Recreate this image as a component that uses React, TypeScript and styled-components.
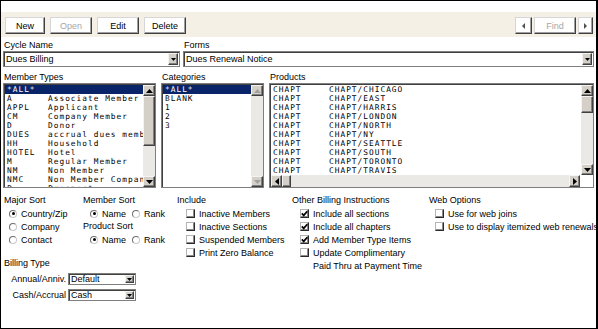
import React from 'react';
import styled, { createGlobalStyle } from 'styled-components';

const SANS = `"Liberation Sans", Arial, sans-serif`;
const MONO = `"DejaVu Sans Mono", "Liberation Mono", monospace`;
const FACE = '#d4d0c8';
const TRACK = '#ebe9e5';
const HILITE = '#0a246a';

const GlobalStyle = createGlobalStyle`
  * { box-sizing: border-box; }
  html, body { margin: 0; padding: 0; background: #fff; }
  body { font-family: ${SANS}; font-size: 9px; color: #000; }
`;

/* ---------- drawings ---------- */
type Dir = 'up' | 'down' | 'left' | 'right';
function Arrow({ dir, w, h, color = '#000' }: { dir: Dir; w: number; h: number; color?: string }) {
  const pts: Record<Dir, string> = {
    down: `0,0 ${w},0 ${w / 2},${h}`,
    up: `0,${h} ${w},${h} ${w / 2},0`,
    left: `${w},0 ${w},${h} 0,${h / 2}`,
    right: `0,0 0,${h} ${w},${h / 2}`,
  };
  return (
    <svg width={w} height={h} viewBox={`0 0 ${w} ${h}`}>
      <polygon points={pts[dir]} fill={color} />
    </svg>
  );
}

function CheckMark() {
  return (
    <svg width="7" height="7" viewBox="0 0 7 7">
      <path d="M0.8 3.4 L2.7 5.4 L6.3 1.2" fill="none" stroke="#000" strokeWidth="1.7" />
    </svg>
  );
}

/* ---------- frame & toolbar ---------- */
const Frame = styled.div`
  width: 598px;
  height: 329px;
  border: 1px solid #000;
  border-right-width: 2px;
  padding-top: 11px;
  display: flex;
  flex-direction: column;
  overflow: hidden;
  background: #fff;
`;

const Toolbar = styled.div`
  flex: none;
  height: 25px;
  background: #f4f0e6;
  display: flex;
  align-items: flex-start;
  padding: 5px 3px 0 4px;
`;

const ButtonGroup = styled.div<{ $gap: number }>`
  display: flex;
  gap: ${p => p.$gap}px;
`;

const Spacer = styled.div`
  flex: 1;
`;

const ToolButton = styled.button<{ $w: number }>`
  width: ${p => p.$w}px;
  height: 17px;
  margin: 0;
  padding: 0;
  background: #fff;
  border: 1px solid;
  border-color: #d6d6d6 #404040 #404040 #d6d6d6;
  box-shadow: inset -1px -1px 0 #a0a0a0;
  font-family: ${SANS};
  font-size: 9px;
  color: #000;
  display: flex;
  align-items: center;
  justify-content: center;
  &:disabled {
    color: #a6a6a6;
  }
`;

/* ---------- content ---------- */
const Content = styled.div`
  flex: 1;
  display: flex;
  flex-direction: column;
  padding: 0 2px;
`;

const TopFields = styled.div`
  display: grid;
  grid-template-columns: 177px 1fr;
  column-gap: 3px;
  margin-top: 3px;
`;

const Field = styled.div`
  display: flex;
  flex-direction: column;
  min-width: 0;
`;

const FieldLabel = styled.div`
  height: 11px;
  line-height: 11px;
  padding-left: 1px;
  white-space: nowrap;
`;

const Select = styled.div<{ $h: number }>`
  height: ${p => p.$h}px;
  border: 1px solid #7f7f7f;
  box-shadow: inset 1px 1px 0 #404040;
  background: #fff;
  display: flex;
  align-items: stretch;
  padding: 1px 1px 1px 2px;
`;

const SelectText = styled.div`
  flex: 1;
  display: flex;
  align-items: center;
  white-space: nowrap;
  overflow: hidden;
`;

const DropButton = styled.div<{ $w: number }>`
  flex: none;
  width: ${p => p.$w}px;
  background: ${FACE};
  border: 1px solid;
  border-color: #f4f4f4 #404040 #404040 #f4f4f4;
  box-shadow: inset -1px -1px 0 #808080;
  display: flex;
  align-items: center;
  justify-content: center;
`;

/* ---------- lists ---------- */
const ListsRow = styled.div`
  display: grid;
  grid-template-columns: 153px 103px 1fr;
  column-gap: 5px;
  margin-top: 5px;
`;

const ListBox = styled.div`
  height: 105px;
  border: 1px solid #7f7f7f;
  box-shadow: inset 1px 1px 0 #404040;
  padding: 1px 0 0 1px;
  display: flex;
  flex-direction: column;
  background: #fff;
  overflow: hidden;
`;

const ListBody = styled.div`
  flex: 1;
  min-height: 0;
  display: flex;
`;

const Items = styled.div`
  flex: 1;
  min-width: 0;
  overflow: hidden;
`;

const ItemRow = styled.div<{ $code: number; $selected?: boolean }>`
  display: grid;
  grid-template-columns: ${p => p.$code}px 1fr;
  height: 9px;
  line-height: 9px;
  padding-left: 2px;
  font-family: ${MONO};
  font-size: 7.8px;
  letter-spacing: 1.02px;
  white-space: pre;
  overflow: hidden;
  background: ${p => (p.$selected ? HILITE : 'transparent')};
  color: ${p => (p.$selected ? '#fff' : '#000')};
`;

const VScroll = styled.div`
  flex: none;
  width: 12px;
  display: flex;
  flex-direction: column;
  background: ${TRACK};
`;

const HScroll = styled.div`
  flex: none;
  height: 12px;
  display: flex;
  background: ${TRACK};
`;

const ScrollBtn = styled.div`
  flex: none;
  width: 12px;
  height: 11px;
  background: ${FACE};
  border: 1px solid;
  border-color: #f4f4f4 #404040 #404040 #f4f4f4;
  box-shadow: inset -1px -1px 0 #808080;
  display: flex;
  align-items: center;
  justify-content: center;
`;

const HScrollBtn = styled(ScrollBtn)`
  width: 11px;
  height: 12px;
`;

const Thumb = styled.div<{ $len: number; $horizontal?: boolean }>`
  flex: none;
  width: ${p => (p.$horizontal ? `${p.$len}px` : '12px')};
  height: ${p => (p.$horizontal ? '12px' : `${p.$len}px`)};
  background: ${FACE};
  border: 1px solid;
  border-color: #f4f4f4 #404040 #404040 #f4f4f4;
  box-shadow: inset -1px -1px 0 #808080;
`;

const Track = styled.div`
  flex: 1;
`;

const Corner = styled.div`
  flex: none;
  width: 13px;
  background: #fff;
`;

/* ---------- options ---------- */
const Options = styled.div`
  display: flex;
  margin-top: 6px;
`;

const LeftPanel = styled.div`
  flex: none;
  width: 173px;
  display: flex;
  flex-direction: column;
`;

const SortRow = styled.div`
  display: flex;
`;

const Group = styled.div<{ $w?: number }>`
  flex: ${p => (p.$w ? 'none' : '1')};
  width: ${p => (p.$w ? `${p.$w}px` : 'auto')};
  display: flex;
  flex-direction: column;
  min-width: 0;
`;

const GroupLabel = styled.div`
  height: 13px;
  line-height: 13px;
  padding-left: 1px;
  white-space: nowrap;
`;

const OptionRow = styled.div<{ $indent: number }>`
  height: 13px;
  display: flex;
  align-items: center;
  padding-left: ${p => p.$indent}px;
  white-space: nowrap;
`;

const RadioItem = styled.label<{ $after?: number }>`
  display: flex;
  align-items: center;
  gap: 4px;
  margin-right: ${p => p.$after ?? 0}px;
`;

const RadioCircle = styled.span<{ $on?: boolean }>`
  width: 8px;
  height: 8px;
  border-radius: 50%;
  border: 1px solid #6e6e6e;
  border-bottom-color: #c8c8c8;
  border-right-color: #c8c8c8;
  background: #fff;
  display: flex;
  align-items: center;
  justify-content: center;
  &::after {
    content: '';
    width: 3px;
    height: 3px;
    border-radius: 50%;
    background: ${p => (p.$on ? '#000' : 'transparent')};
  }
`;

const CheckItem = styled.label`
  display: flex;
  align-items: center;
  gap: 4px;
`;

const CheckBox = styled.span`
  flex: none;
  width: 9px;
  height: 9px;
  background: #fff;
  border: 1px solid;
  border-color: #b4b4b4 #2a2a2a #2a2a2a #b4b4b4;
  box-shadow: inset -1px -1px 0 #8a8a8a;
  display: flex;
  align-items: center;
  justify-content: center;
`;

const BillingBlock = styled.div`
  display: flex;
  flex-direction: column;
  margin-top: 11px;
`;

const BillingRow = styled.div`
  display: grid;
  grid-template-columns: 63px 68px;
  column-gap: 2px;
  align-items: center;
  margin-top: 3px;
  & + & {
    margin-top: 4px;
  }
`;

const BillingLabel = styled.div`
  text-align: right;
  white-space: nowrap;
`;

/* ---------- data ---------- */
const memberTypes: [string, string][] = [
  ['*ALL*', ''],
  ['A', 'Associate Member'],
  ['APPL', 'Applicant'],
  ['CM', 'Company Member'],
  ['D', 'Donor'],
  ['DUES', 'accrual dues member'],
  ['HH', 'Household'],
  ['HOTEL', 'Hotel'],
  ['M', 'Regular Member'],
  ['NM', 'Non Member'],
  ['NMC', 'Non Member Company'],
  ['P', 'Prospect'],
];

const categories = ['*ALL*', 'BLANK', '1', '2', '3'];

const products = ['CHICAGO', 'EAST', 'HARRIS', 'LONDON', 'NORTH', 'NY', 'SEATTLE', 'SOUTH', 'TORONTO', 'TRAVIS'];

function SelectBox({ value, h, btn }: { value: string; h: number; btn: number }) {
  return (
    <Select $h={h}>
      <SelectText>{value}</SelectText>
      <DropButton $w={btn}>
        <Arrow dir="down" w={5} h={3} />
      </DropButton>
    </Select>
  );
}

function Radio({ label, on, after }: { label: string; on?: boolean; after?: number }) {
  return (
    <RadioItem $after={after}>
      <RadioCircle $on={on} />
      {label}
    </RadioItem>
  );
}

function Check({ label, on }: { label: string; on?: boolean }) {
  return (
    <CheckItem>
      <CheckBox>{on && <CheckMark />}</CheckBox>
      {label}
    </CheckItem>
  );
}

export default function App() {
  return (
    <>
      <GlobalStyle />
      <Frame>
        <Toolbar>
          <ButtonGroup $gap={5}>
            <ToolButton $w={40}>New</ToolButton>
            <ToolButton $w={42} disabled>Open</ToolButton>
            <ToolButton $w={42}>Edit</ToolButton>
            <ToolButton $w={42}>Delete</ToolButton>
          </ButtonGroup>
          <Spacer />
          <ButtonGroup $gap={2}>
            <ToolButton $w={17}>
              <Arrow dir="left" w={3} h={6} color="#505050" />
            </ToolButton>
            <ToolButton $w={42} disabled>Find</ToolButton>
            <ToolButton $w={15}>
              <Arrow dir="right" w={3} h={6} color="#505050" />
            </ToolButton>
          </ButtonGroup>
        </Toolbar>

        <Content>
          <TopFields>
            <Field>
              <FieldLabel>Cycle Name</FieldLabel>
              <SelectBox value="Dues Billing" h={16} btn={10} />
            </Field>
            <Field>
              <FieldLabel>Forms</FieldLabel>
              <SelectBox value="Dues Renewal Notice" h={16} btn={10} />
            </Field>
          </TopFields>

          <ListsRow>
            <Field>
              <FieldLabel>Member Types</FieldLabel>
              <ListBox>
                <ListBody>
                  <Items>
                    {memberTypes.map(([code, desc], i) => (
                      <ItemRow key={code} $code={41} $selected={i === 0}>
                        <span>{code}</span>
                        <span>{desc}</span>
                      </ItemRow>
                    ))}
                  </Items>
                  <VScroll>
                    <ScrollBtn><Arrow dir="up" w={7} h={4} /></ScrollBtn>
                    <Thumb $len={50} />
                    <Track />
                    <ScrollBtn><Arrow dir="down" w={7} h={4} /></ScrollBtn>
                  </VScroll>
                </ListBody>
              </ListBox>
            </Field>

            <Field>
              <FieldLabel>Categories</FieldLabel>
              <ListBox>
                <ListBody>
                  <Items>
                    {categories.map((c, i) => (
                      <ItemRow key={c} $code={88} $selected={i === 0}>
                        <span>{c}</span>
                        <span />
                      </ItemRow>
                    ))}
                  </Items>
                  <VScroll>
                    <ScrollBtn><Arrow dir="up" w={7} h={4} color="#a0a0a0" /></ScrollBtn>
                    <Track />
                    <ScrollBtn><Arrow dir="down" w={7} h={4} color="#a0a0a0" /></ScrollBtn>
                  </VScroll>
                </ListBody>
              </ListBox>
            </Field>

            <Field>
              <FieldLabel>Products</FieldLabel>
              <ListBox>
                <ListBody>
                  <Items>
                    {products.map(p => (
                      <ItemRow key={p} $code={56}>
                        <span>CHAPT</span>
                        <span>{`CHAPT/${p}`}</span>
                      </ItemRow>
                    ))}
                  </Items>
                  <VScroll>
                    <ScrollBtn><Arrow dir="up" w={7} h={4} /></ScrollBtn>
                    <Thumb $len={17} />
                    <Track />
                    <ScrollBtn><Arrow dir="down" w={7} h={4} /></ScrollBtn>
                  </VScroll>
                </ListBody>
                <HScroll>
                  <HScrollBtn><Arrow dir="left" w={4} h={7} /></HScrollBtn>
                  <Thumb $len={9} $horizontal />
                  <Track />
                  <HScrollBtn><Arrow dir="right" w={4} h={7} /></HScrollBtn>
                  <Corner />
                </HScroll>
              </ListBox>
            </Field>
          </ListsRow>

          <Options>
            <LeftPanel>
              <SortRow>
                <Group $w={79}>
                  <GroupLabel>Major Sort</GroupLabel>
                  <OptionRow $indent={6}><Radio label="Country/Zip" on /></OptionRow>
                  <OptionRow $indent={6}><Radio label="Company" /></OptionRow>
                  <OptionRow $indent={6}><Radio label="Contact" /></OptionRow>
                </Group>
                <Group>
                  <GroupLabel>Member Sort</GroupLabel>
                  <OptionRow $indent={8}>
                    <Radio label="Name" on after={6} />
                    <Radio label="Rank" />
                  </OptionRow>
                  <GroupLabel>Product Sort</GroupLabel>
                  <OptionRow $indent={8}>
                    <Radio label="Name" on after={6} />
                    <Radio label="Rank" />
                  </OptionRow>
                </Group>
              </SortRow>
              <BillingBlock>
                <GroupLabel>Billing Type</GroupLabel>
                <BillingRow>
                  <BillingLabel>Annual/Anniv.</BillingLabel>
                  <SelectBox value="Default" h={12} btn={9} />
                </BillingRow>
                <BillingRow>
                  <BillingLabel>Cash/Accrual</BillingLabel>
                  <SelectBox value="Cash" h={12} btn={9} />
                </BillingRow>
              </BillingBlock>
            </LeftPanel>

            <Group $w={115}>
              <GroupLabel>Include</GroupLabel>
              <OptionRow $indent={10}><Check label="Inactive Members" /></OptionRow>
              <OptionRow $indent={10}><Check label="Inactive Sections" /></OptionRow>
              <OptionRow $indent={10}><Check label="Suspended Members" /></OptionRow>
              <OptionRow $indent={10}><Check label="Print Zero Balance" /></OptionRow>
            </Group>

            <Group $w={137}>
              <GroupLabel>Other Billing Instructions</GroupLabel>
              <OptionRow $indent={9}><Check label="Include all sections" on /></OptionRow>
              <OptionRow $indent={9}><Check label="Include all chapters" on /></OptionRow>
              <OptionRow $indent={9}><Check label="Add Member Type Items" on /></OptionRow>
              <OptionRow $indent={9}><Check label="Update Complimentary" /></OptionRow>
              <OptionRow $indent={22}>Paid Thru at Payment Time</OptionRow>
            </Group>

            <Group>
              <GroupLabel>Web Options</GroupLabel>
              <OptionRow $indent={7}><Check label="Use for web joins" /></OptionRow>
              <OptionRow $indent={7}><Check label="Use to display itemized web renewals" /></OptionRow>
            </Group>
          </Options>
        </Content>
      </Frame>
    </>
  );
}
